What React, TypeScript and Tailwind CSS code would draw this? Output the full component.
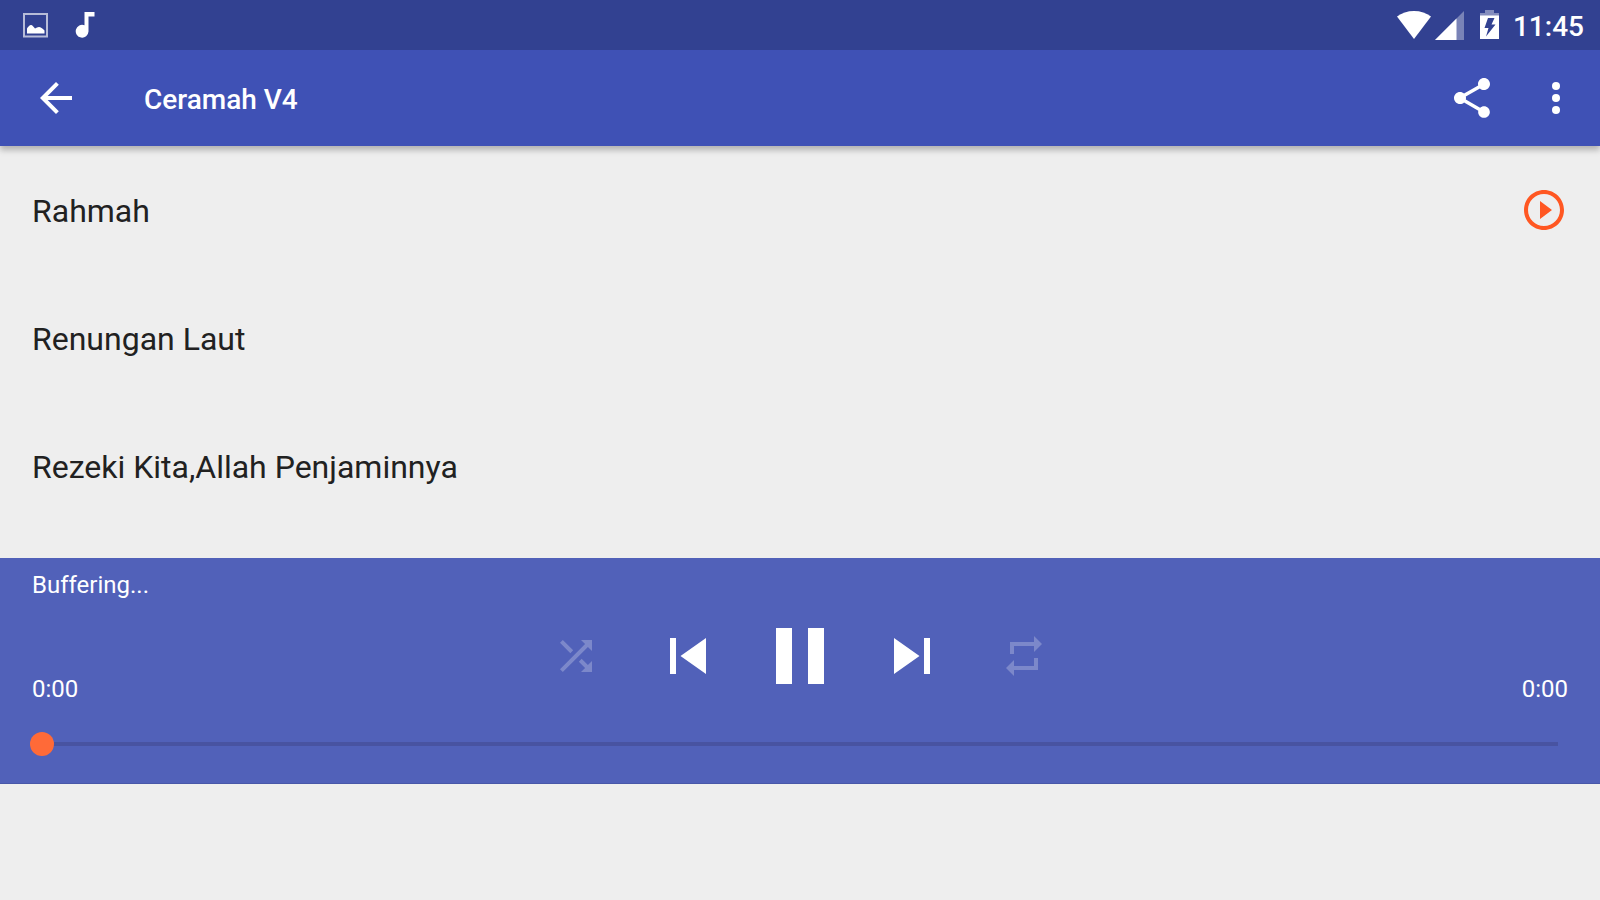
import { useState } from "react";
import type { ReactNode } from "react";

type IconProps = { className?: string; children: ReactNode };

function Icon({ className = "size-12", children }: IconProps) {
  return (
    <svg viewBox="0 0 24 24" fill="currentColor" aria-hidden="true" className={className}>
      {children}
    </svg>
  );
}

function StatusBar() {
  return (
    <div className="relative z-10 flex h-[50px] items-center justify-between bg-[#324191] pr-4 pl-[22px]">
      <div className="flex items-center gap-[27px]">
        <svg viewBox="0 0 26 26" className="size-[26px]" aria-hidden="true">
          <rect x="2" y="2" width="23" height="22.5" fill="none" stroke="#ffffff" strokeOpacity="0.65" strokeWidth="2" />
          <path d="M5 21.500V16.500c1-1.500 2.500-3.500 4-3.500s2.500 2 4 3.500c1.500-.5 2.500-1.500 4-1.500s3.500 1.500 5.500 3.500v3z" fill="#ffffff" />
        </svg>
        <svg viewBox="0 0 20 26" className="h-[26px] w-5" aria-hidden="true">
          <path d="M9.500 0v13.300A6.400 6.400 0 1 0 13.500 19.600V4.600H19.500V0z" fill="#ffffff" />
        </svg>
      </div>
      <div className="flex items-center">
        <svg viewBox="0 0 34 30" className="h-[30px] w-[34px]" aria-hidden="true">
          <path d="M17 29L0 6.600C4.500 3 10.500 1 17 1s12.500 2 17 5.600z" fill="#ffffff" />
        </svg>
        <svg viewBox="0 0 29 30" className="ml-1 h-[30px] w-[29px]" aria-hidden="true">
          <path d="M0 30L29 1v29z" fill="#ffffff" fillOpacity="0.35" />
          <path d="M0 30L21.500 8.500V30z" fill="#ffffff" />
        </svg>
        <svg viewBox="0 0 20 30" className="ml-4 h-[30px] w-5" aria-hidden="true">
          <path d="M5 0h9v3h5v3H0V3h5z" fill="#ffffff" fillOpacity="0.4" />
          <path d="M0 5.500h19V29H0zM8 8L4.500 18H8.500L6 26.500 15.500 14.500H11.500L14.500 8z" fill="#ffffff" fillRule="evenodd" />
        </svg>
        <span className="ml-[13px] pt-[3px] text-[28px] leading-8 font-medium">11:45</span>
      </div>
    </div>
  );
}

function AppBar() {
  return (
    <header className="relative flex h-24 items-center bg-[#3f51b5] pr-5 pl-8 shadow-[0_4px_6px_rgba(0,0,0,0.26)]">
      <button type="button" aria-label="Back">
        <Icon>
          <path d="M20 11H7.830l5.590-5.590L12 4l-8 8 8 8 1.410-1.410L7.830 13H20v-2z" />
        </Icon>
      </button>
      <h1 className="ml-16 flex-1 pt-[3px] text-[28px] leading-8 font-medium">Ceramah V4</h1>
      <button type="button" aria-label="Share">
        <Icon>
          <path d="M18 16.080c-.76 0-1.440.3-1.960.77L8.910 12.700c.05-.23.09-.46.09-.7s-.04-.47-.09-.7l7.050-4.110c.54.5 1.250.81 2.040.81 1.660 0 3-1.340 3-3s-1.340-3-3-3-3 1.340-3 3c0 .24.04.47.09.7L8.040 9.810C7.500 9.310 6.790 9 6 9c-1.660 0-3 1.340-3 3s1.340 3 3 3c.79 0 1.500-.31 2.040-.81l7.120 4.160c-.05.21-.08.43-.08.65 0 1.610 1.310 2.920 2.920 2.920s2.920-1.310 2.920-2.920-1.310-2.920-2.920-2.920z" />
        </Icon>
      </button>
      <button type="button" aria-label="More options" className="ml-9">
        <Icon>
          <circle cx="12" cy="6" r="2" />
          <circle cx="12" cy="12" r="2" />
          <circle cx="12" cy="18" r="2" />
        </Icon>
      </button>
    </header>
  );
}

const tracks = ["Rahmah", "Renungan Laut", "Rezeki Kita,Allah Penjaminnya"];

function TrackList() {
  return (
    <ul className="pb-7">
      {tracks.map((title, index) => (
        <li key={title}>
          <button type="button" className="flex h-32 w-full items-center justify-between px-8 text-left text-[32px] leading-10 text-[#212121]">
            <span className="pt-0.5">{title}</span>
            {index === 0 && (
              <span className="text-[#ff5722]">
                <Icon>
                  <path d="M10 16.500l6-4.500-6-4.500v9zM12 2C6.480 2 2 6.480 2 12s4.480 10 10 10 10-4.480 10-10S17.520 2 12 2zm0 18c-4.410 0-8-3.590-8-8s3.590-8 8-8 8 3.590 8 8-3.590 8-8 8z" />
                </Icon>
              </span>
            )}
          </button>
        </li>
      ))}
    </ul>
  );
}

const controlClass = "flex h-24 w-28 items-center justify-center";

function Player() {
  const [position, setPosition] = useState(0);
  return (
    <section aria-label="Player" className="border-b border-[#4857a8] bg-[#5161b9] pt-3">
      <p className="px-8 pb-2 text-2xl leading-[30px]">Buffering...</p>
      <div className="grid grid-cols-[1fr_auto_1fr] items-end px-8">
        <span className="text-2xl leading-[30px]">0:00</span>
        <div className="flex items-center">
          <button type="button" aria-label="Shuffle" className={`${controlClass} text-white/25`}>
            <Icon>
              <path d="M10.590 9.170L5.410 4 4 5.410l5.170 5.170 1.420-1.410zM14.500 4l2.040 2.040L4 18.590 5.410 20 17.960 7.460 20 9.500V4h-5.500zm.33 9.410l-1.410 1.410 3.130 3.130L14.500 20H20v-5.500l-2.040 2.040-3.130-3.130z" />
            </Icon>
          </button>
          <button type="button" aria-label="Previous" className={controlClass}>
            <Icon className="size-18">
              <path d="M6 6h2v12H6zm3.500 6l8.500 6V6z" />
            </Icon>
          </button>
          <button type="button" aria-label="Pause" className={controlClass}>
            <Icon className="size-24">
              <path d="M6 19h4V5H6v14zm8-14v14h4V5h-4z" />
            </Icon>
          </button>
          <button type="button" aria-label="Next" className={controlClass}>
            <Icon className="size-18">
              <path d="M6 18l8.500-6L6 6v12zM16 6v12h2V6h-2z" />
            </Icon>
          </button>
          <button type="button" aria-label="Repeat" className={`${controlClass} text-white/25`}>
            <Icon>
              <path d="M7 7h10v3l4-4-4-4v3H5v6h2V7zm10 10H7v-3l-4 4 4 4v-3h12v-6h-2v4z" />
            </Icon>
          </button>
        </div>
        <span className="text-right text-2xl leading-[30px]">0:00</span>
      </div>
      <div className="flex h-[79px] items-center px-[30px]">
        <input
          type="range"
          aria-label="Playback position"
          min={0}
          max={100}
          value={position}
          onChange={(event) => setPosition(Number(event.target.value))}
          className="h-6 w-full appearance-none bg-[linear-gradient(#4853a1,#4853a1)] bg-[length:calc(100%-24px)_4px] bg-center bg-no-repeat [&::-webkit-slider-thumb]:size-6 [&::-webkit-slider-thumb]:appearance-none [&::-webkit-slider-thumb]:rounded-full [&::-webkit-slider-thumb]:bg-[#ff6a38]"
        />
      </div>
    </section>
  );
}

export default function App() {
  return (
    <div className="min-h-screen bg-[#eeeeee] font-[Roboto,sans-serif] text-white">
      <StatusBar />
      <AppBar />
      <main>
        <TrackList />
        <Player />
      </main>
    </div>
  );
}
